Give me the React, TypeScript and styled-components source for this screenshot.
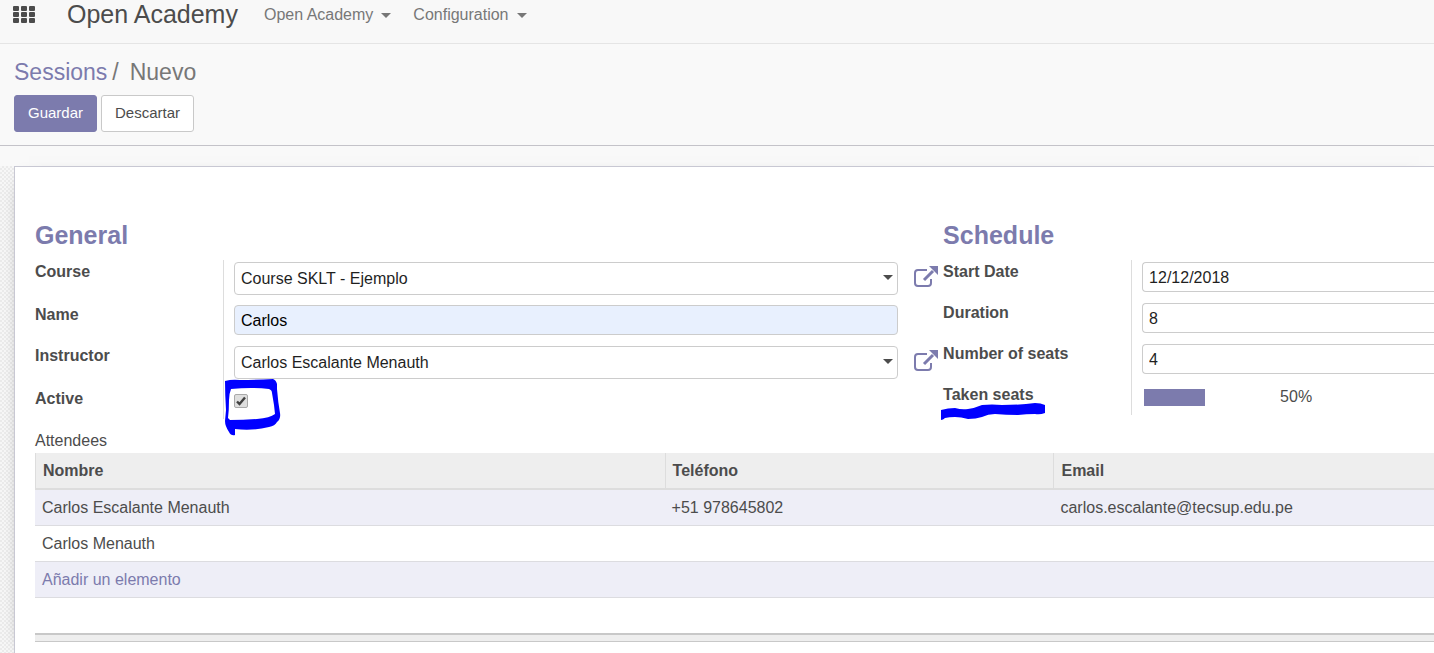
import React from "react";
import styled, { createGlobalStyle } from "styled-components";

const purple = "#7c7bad";

const GlobalStyle = createGlobalStyle`
  *, *::before, *::after { box-sizing: border-box; }
  html { min-height: 100%; background: #f9f9f9; }
  body {
    margin: 0;
    font-family: "Liberation Sans", Arial, sans-serif;
    font-size: 16px;
    line-height: 24px;
    color: #4c4c4c;
    overflow: hidden;
  }
  button, input, select { font: inherit; }
`;

const Page = styled.div`
  display: flex;
  flex-direction: column;
  min-height: 100vh;
`;

const Navbar = styled.nav`
  display: flex;
  align-items: center;
  height: 44px;
  padding: 0 12px 16px;
  border-bottom: 1px solid #e5e5e5;
  background: #f8f8f8;
`;

const AppsButton = styled.button`
  display: flex;
  width: 24px;
  height: 18px;
  margin-right: 31px;
  padding: 0;
  border: 0;
  background: none;
`;

const Brand = styled.a`
  margin-right: 26px;
  font-size: 25px;
  line-height: 28px;
  color: #4c4c4c;
  text-decoration: none;
`;

const Menu = styled.button`
  display: flex;
  align-items: center;
  gap: 8px;
  margin-right: 22px;
  padding: 3px 0 0;
  border: 0;
  background: none;
  color: #777;
`;

const Caret = styled.span`
  border: 5px solid transparent;
  border-top-color: currentColor;
  border-bottom: 0;
`;

const ControlPanel = styled.header`
  display: flex;
  flex-direction: column;
  gap: 9px;
  padding: 14px 14px 13px;
  border-bottom: 1px solid #c4c3c9;
  background: #f9f9f9;
`;

const Breadcrumb = styled.div`
  display: flex;
  gap: 5px;
  font-size: 23px;
  line-height: 28px;
  color: #777;
`;

const Crumb = styled.a`
  color: ${purple};
  text-decoration: none;
`;

const Current = styled.span`
  margin-left: 6px;
`;

const Actions = styled.div`
  display: flex;
  gap: 4px;
`;

const Button = styled.button<{ $primary?: boolean }>`
  height: 37px;
  padding: 0 13px 2px;
  border: 1px solid ${(p) => (p.$primary ? purple : "#c9c9c9")};
  border-radius: 3px;
  background: ${(p) => (p.$primary ? purple : "#fff")};
  color: ${(p) => (p.$primary ? "#fff" : "#4c4c4c")};
  font-size: 15px;
`;

const Workspace = styled.main`
  flex: 1;
  display: flex;
  margin-top: 20px;
  padding-left: 14px;
  background: repeating-conic-gradient(#ebebeb 0 25%, #f7f7f7 0 50%) 0 0 / 4px 4px;
`;

const Sheet = styled.div`
  flex: 1;
  min-width: 0;
  padding: 50px 0 0 20px;
  border: solid #c8c8d3;
  border-width: 1px 0 0 1px;
  background: #fff;
  box-shadow: 0 5px 20px -15px #000;
`;

const Groups = styled.div`
  display: grid;
  grid-template-columns: minmax(0, 1.85fr) minmax(0, 1fr);
`;

const GroupTitle = styled.h2`
  margin: 0 0 6px;
  font-size: 25px;
  line-height: 37px;
  color: ${purple};
`;

const Fields = styled.div`
  display: grid;
  grid-template-columns: 188px minmax(0, 1fr);
`;

const Label = styled.label`
  font-weight: bold;
`;

const rowHeights = { short: 32, normal: 41, tall: 43 };

const Cell = styled.div<{ $size?: keyof typeof rowHeights }>`
  display: flex;
  align-items: flex-start;
  gap: 15px;
  height: ${(p) => rowHeights[p.$size ?? "normal"]}px;
  padding: 2px 5px 0 10px;
  border-left: 1px solid #ddd;
`;

const TextInput = styled.input<{ $filled?: boolean; $bleed?: boolean }>`
  flex: 1;
  min-width: 0;
  height: 30px;
  margin-right: ${(p) => (p.$bleed ? -5 : 40)}px;
  padding: 2px 6px 0;
  border: 1px solid #ccc;
  border-right-width: ${(p) => (p.$bleed ? 0 : 1)}px;
  border-radius: ${(p) => (p.$bleed ? "4px 0 0 4px" : "4px")};
  background: ${(p) => (p.$filled ? "#e8f0fe" : "#fff")};
  color: ${(p) => (p.$filled ? "#000" : "#1f1f1f")};
`;

const SelectBox = styled.div`
  flex: 1;
  display: grid;
  align-items: center;
  min-width: 0;

  > * { grid-area: 1 / 1; }
  > span { justify-self: end; margin: 0 5px 3px 0; pointer-events: none; }
`;

const Select = styled.select`
  appearance: none;
  width: 100%;
  height: 33px;
  padding: 0 6px;
  border: 1px solid #ccc;
  border-radius: 4px;
  background: #fff;
  color: #1f1f1f;
`;

const LinkButton = styled.button`
  display: flex;
  width: 25px;
  height: 25px;
  margin-top: 3px;
  padding: 0;
  border: 0;
  background: none;
  color: ${purple};
`;

const Checkbox = styled.input`
  appearance: none;
  width: 14px;
  height: 14px;
  margin: 5px 0 0;
  border: 1px solid #a9a9a9;
  border-radius: 2px;
  background: #dedede;
`;

const CheckWrap = styled.div`
  position: relative;
  display: grid;
  > * { grid-area: 1 / 1; }
`;

const Tick = styled.svg`
  width: 14px;
  height: 14px;
  margin-top: 5px;
  pointer-events: none;
`;

const CircleMark = styled.svg`
  position: absolute;
  left: -10px;
  top: -11px;
  width: 58px;
  height: 58px;
  pointer-events: none;
`;

const MarkedLabel = styled(Label)`
  position: relative;
`;

const Underline = styled.svg`
  position: absolute;
  left: -2px;
  top: 20px;
  width: 106px;
  height: 18px;
  pointer-events: none;
`;

const Progress = styled.div`
  display: flex;
  align-items: center;
  gap: 75px;
  padding-left: 2px;
`;

const Track = styled.div`
  width: 61px;
  height: 17px;
  background: ${purple};
`;

const SectionLabel = styled.div`
  margin-top: 10px;
`;

const Table = styled.table`
  width: 100%;
  border-spacing: 0;
  table-layout: fixed;

  th, td { height: 36px; padding: 0 7px; text-align: left; }
  th {
    height: 37px;
    border-left: 1px solid #ddd;
    border-bottom: 2px solid #ddd;
    background: #eee;
  }
  th:nth-child(1) { width: 45%; }
  th:nth-child(2) { width: 27.8%; }
  td { border-bottom: 1px solid #dcdce0; }
  tbody tr:nth-child(odd) { background: #eeeef7; }
`;

const Footer = styled.div`
  height: 9px;
  margin-top: 35px;
  border: solid #c8c8c8;
  border-width: 2px 0 1px;
  background: #eee;
`;

const ExternalIcon = () => (
  <svg width="25" height="25" viewBox="0 0 25 25" fill="none" aria-hidden="true">
    <path d="M14 5H5Q2 5 2 8V18Q2 21 5 21H15Q18 21 18 18V14" stroke="currentColor" strokeWidth="2" />
    <path d="M11 15L20 6" stroke="currentColor" strokeWidth="3" />
    <path d="M16 1H25V10Z" fill="currentColor" />
  </svg>
);

const Dropdown = ({ id, value }: { id: string; value: string }) => (
  <>
    <SelectBox>
      <Select id={id}><option>{value}</option></Select>
      <Caret />
    </SelectBox>
    <LinkButton aria-label="Open record"><ExternalIcon /></LinkButton>
  </>
);

const attendees = [
  { name: "Carlos Escalante Menauth", phone: "+51 978645802", email: "carlos.escalante@tecsup.edu.pe" },
  { name: "Carlos Menauth", phone: "", email: "" },
];

export default function App() {
  return (
    <Page>
      <GlobalStyle />
      <Navbar>
        <AppsButton aria-label="Applications">
          <svg width="24" height="18" fill="#4c4c4c" aria-hidden="true">
            {[1, 7, 13].map((y) => [1, 9, 17].map((x) => (
              <rect key={`${x}-${y}`} x={x} y={y} width="6" height="5" rx="1" />
            )))}
          </svg>
        </AppsButton>
        <Brand href="#">Open Academy</Brand>
        <Menu>Open Academy<Caret /></Menu>
        <Menu>Configuration<Caret /></Menu>
      </Navbar>
      <ControlPanel>
        <Breadcrumb>
          <Crumb href="#">Sessions</Crumb>
          <span>/</span>
          <Current>Nuevo</Current>
        </Breadcrumb>
        <Actions>
          <Button $primary>Guardar</Button>
          <Button>Descartar</Button>
        </Actions>
      </ControlPanel>
      <Workspace>
        <Sheet>
          <Groups>
            <section>
              <GroupTitle>General</GroupTitle>
              <Fields>
                <Label htmlFor="course">Course</Label>
                <Cell $size="tall"><Dropdown id="course" value="Course SKLT - Ejemplo" /></Cell>
                <Label htmlFor="name">Name</Label>
                <Cell><TextInput id="name" $filled defaultValue="Carlos" /></Cell>
                <Label htmlFor="instructor">Instructor</Label>
                <Cell $size="tall"><Dropdown id="instructor" value="Carlos Escalante Menauth" /></Cell>
                <Label htmlFor="active">Active</Label>
                <Cell $size="short">
                  <CheckWrap>
                    <Checkbox id="active" type="checkbox" defaultChecked />
                    <Tick viewBox="0 0 14 14" aria-hidden="true">
                      <path d="M3 7.500L5.500 10L11 3.500" fill="none" stroke="#404040" strokeWidth="2.400" />
                    </Tick>
                    <CircleMark viewBox="0 0 58 58" aria-hidden="true">
                      <path d="M1 3Q8 1 16 2Q33 2 49 1Q52 2 53 6L53 11Q54 24 56 35Q57 41 53 44Q51 48 45 49Q29 53 11 51L11 57Q7 58 5 54Q1 48 1 43L2 32Q1 16 1 3ZM7 11Q5 16 5 22Q5 32 4 40L6 42Q20 42 33 41Q46 40 51 36L50 27L48 15Q48 12 45 11Q28 9 7 11Z" fill="#00f" fillRule="evenodd" />
                    </CircleMark>
                  </CheckWrap>
                </Cell>
              </Fields>
            </section>
            <section>
              <GroupTitle>Schedule</GroupTitle>
              <Fields>
                <Label htmlFor="start">Start Date</Label>
                <Cell><TextInput id="start" $bleed defaultValue="12/12/2018" /></Cell>
                <Label htmlFor="duration">Duration</Label>
                <Cell><TextInput id="duration" $bleed defaultValue="8" /></Cell>
                <Label htmlFor="seats">Number of seats</Label>
                <Cell><TextInput id="seats" $bleed defaultValue="4" /></Cell>
                <MarkedLabel htmlFor="taken">
                  Taken seats
                  <Underline viewBox="0 0 106 18" aria-hidden="true">
                    <path d="M0 7Q7 5 14 5Q21 7 27 6Q34 5 41 2Q51 1 61 2Q80 2 94 0Q100 0 104 2V10Q99 12 94 11Q85 11 77 12Q65 12 54 11Q47 11 41 14Q35 16 27 16Q20 14 14 14Q8 14 4 15Q2 17 0 17Z" fill="#00f" />
                  </Underline>
                </MarkedLabel>
                <Cell $size="short">
                  <Progress><Track id="taken" role="progressbar" aria-label="Taken seats" aria-valuenow={50} />50%</Progress>
                </Cell>
              </Fields>
            </section>
          </Groups>
          <SectionLabel>Attendees</SectionLabel>
          <Table>
            <thead>
              <tr><th>Nombre</th><th>Teléfono</th><th>Email</th></tr>
            </thead>
            <tbody>
              {attendees.map((a) => (
                <tr key={a.name}><td>{a.name}</td><td>{a.phone}</td><td>{a.email}</td></tr>
              ))}
              <tr><td colSpan={3}><Crumb href="#">Añadir un elemento</Crumb></td></tr>
            </tbody>
          </Table>
          <Footer />
        </Sheet>
      </Workspace>
    </Page>
  );
}
